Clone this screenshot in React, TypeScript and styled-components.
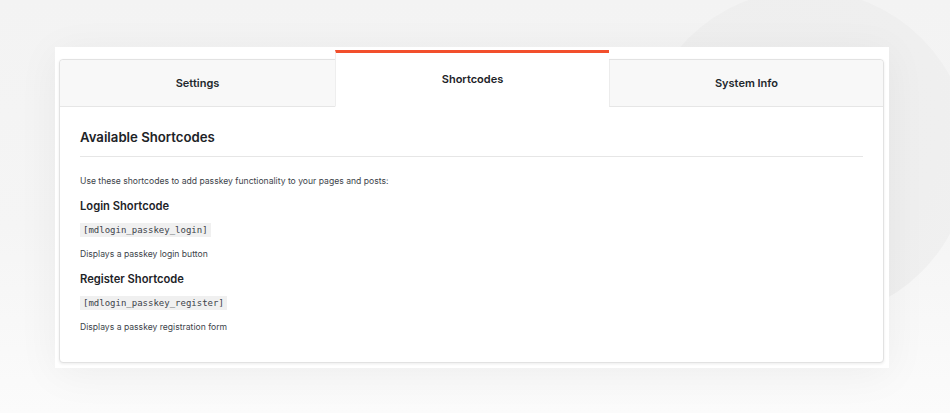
import React, { useState } from "react";
import styled, { createGlobalStyle, css } from "styled-components";

const Global = createGlobalStyle`
  html, body { margin: 0; padding: 0; }
  body {
    width: 950px;
    height: 413px;
    overflow: hidden;
    font-family: Inter, "Noto Sans", "Liberation Sans", sans-serif;
    -webkit-font-smoothing: antialiased;
  }
`;

const Page = styled.div`
  position: relative;
  width: 950px;
  height: 413px;
  box-sizing: border-box;
  padding: 47px 0 0 55px;
  background: linear-gradient(180deg, #f3f3f3 0%, #f5f5f5 55%, #fbfbfb 100%);
  overflow: hidden;
`;

const Decor = styled.div`
  position: absolute;
  left: 640px;
  top: -10px;
  width: 330px;
  height: 330px;
  border-radius: 50%;
  background: radial-gradient(circle at 40% 40%, #eeeeee 0%, #efefef 60%, #f1f1f1 100%);
`;

const Frame = styled.div`
  position: relative;
  width: 834px;
  height: 321px;
  box-sizing: border-box;
  padding: 12px 5px 5px 4px;
  background: #ffffff;
  box-shadow: 0 6px 40px rgba(0, 0, 0, 0.05);
`;

const Card = styled.div`
  height: 100%;
  box-sizing: border-box;
  border: 1px solid #e2e2e2;
  border-radius: 4px;
  background: #fff;
  box-shadow: 0 1px 3px rgba(0, 0, 0, 0.08);
  display: flex;
  flex-direction: column;
`;

const TabBar = styled.div`
  display: grid;
  grid-template-columns: 275px 274px 1fr;
  height: 47px;
  flex: none;
`;

const Tab = styled.button<{ $active?: boolean }>`
  margin: 0;
  padding: 0;
  border: none;
  border-bottom: 1px solid #e6e6e6;
  background: #f8f8f8;
  font-family: inherit;
  font-size: 11px;
  font-weight: 600;
  color: #23282d;
  cursor: pointer;
  &:first-child { border-top-left-radius: 4px; }
  &:last-child { border-top-right-radius: 4px; border-left: 1px solid #ececec; }
  ${(p) =>
    p.$active &&
    css`
      margin-top: -10px;
      background: #fff;
      border-top: 3px solid #f24f2c;
      border-left: 1px solid #eeeeee;
      border-bottom-color: #fff;
      padding-bottom: 2px;
      color: #1d2327;
      position: relative;
    `}
`;

const Content = styled.div`
  padding: 20px 20px 30px;
  display: flex;
  flex-direction: column;
`;

const Title = styled.h2`
  margin: 0;
  padding-bottom: 9px;
  border-bottom: 1px solid #e6e6e6;
  font-size: 13.2px;
  line-height: 20px;
  font-weight: 600;
  color: #1d2327;
`;

const Text = styled.p<{ $gap: number }>`
  margin: ${(p) => p.$gap}px 0 0;
  font-size: 8.6px;
  line-height: 14px;
  color: #3c434a;
`;

const SubTitle = styled.h3`
  margin: 10px 0 0;
  font-size: 11.2px;
  line-height: 16px;
  font-weight: 600;
  color: #1d2327;
`;

const Code = styled.code`
  align-self: flex-start;
  margin-top: 9px;
  padding: 0 3px;
  height: 14px;
  line-height: 14px;
  background: #f0f0f0;
  font-family: "DejaVu Sans Mono", "Liberation Mono", monospace;
  font-size: 9px;
  color: #3c434a;
`;

const tabs = ["Settings", "Shortcodes", "System Info"];

const shortcodes = [
  { title: "Login Shortcode", code: "[mdlogin_passkey_login]", desc: "Displays a passkey login button" },
  { title: "Register Shortcode", code: "[mdlogin_passkey_register]", desc: "Displays a passkey registration form" },
];

export default function App() {
  const [active, setActive] = useState(1);
  return (
    <Page>
      <Global />
      <Decor />
      <Frame>
        <Card>
          <TabBar>
            {tabs.map((t, i) => (
              <Tab key={t} $active={i === active} onClick={() => setActive(i)}>
                {t}
              </Tab>
            ))}
          </TabBar>
          <Content>
            <Title>Available Shortcodes</Title>
            <Text $gap={17}>Use these shortcodes to add passkey functionality to your pages and posts:</Text>
            {shortcodes.map((s) => (
              <React.Fragment key={s.code}>
                <SubTitle>{s.title}</SubTitle>
                <Code>{s.code}</Code>
                <Text $gap={10}>{s.desc}</Text>
              </React.Fragment>
            ))}
          </Content>
        </Card>
      </Frame>
    </Page>
  );
}
